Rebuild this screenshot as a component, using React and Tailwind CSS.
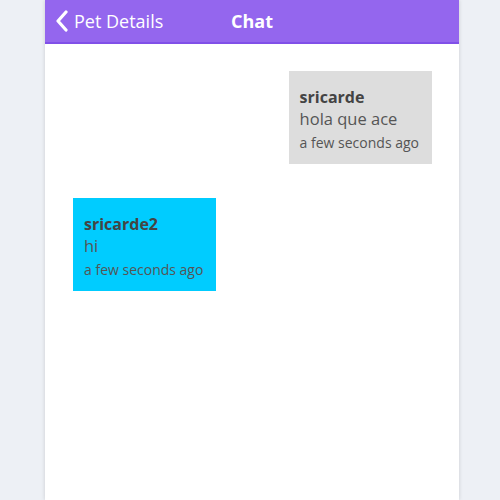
import React from 'react';

const messages = [
  { user: 'sricarde', text: 'hola que ace', time: 'a few seconds ago', mine: true },
  { user: 'sricarde2', text: 'hi', time: 'a few seconds ago', mine: false },
];

const ChatPage = () => {
  return (
    <div className="min-h-[500px] bg-[#edf0f5] font-['Open_Sans',sans-serif]">
      <div className="ml-[45px] w-[414px] min-h-[500px] bg-white shadow-[0_0_4px_rgba(0,0,0,0.15)]">
        <header className="relative h-[44px] bg-[#9466ee] border-b-2 border-[#8050e8] flex items-center justify-center">
          <div className="absolute left-[9px] top-0 h-full flex items-center gap-[4px] text-white">
            <svg width="16" height="22" viewBox="0 0 16 22" fill="none">
              <path d="M12 2 L4 11 L12 20" stroke="white" strokeWidth="3.2" strokeLinecap="round" strokeLinejoin="round" />
            </svg>
            <span className="text-[18px]">Pet Details</span>
          </div>
          <h1 className="text-white text-[18px] font-bold">Chat</h1>
        </header>

        <div className="flex flex-col gap-[34px] px-[27px] pt-[27px]">
          {messages.map((m, i) => (
            <div key={i} className={m.mine ? 'flex justify-end' : 'flex justify-start ml-px'}>
              <div
                className={
                  (m.mine ? 'bg-[#dddddd]' : 'bg-[#00ccff]') +
                  ' pl-[11px] pr-[13px] pt-[15px] pb-[8px] text-[#444]'
                }
              >
                <p className="text-[16px] font-bold leading-[22px]">{m.user}</p>
                <p className="text-[16.5px] leading-[22px] text-[#555]">{m.text}</p>
                <p className="text-[14px] leading-[26px] text-[#555]">{m.time}</p>
              </div>
            </div>
          ))}
        </div>
      </div>
    </div>
  );
};

export default ChatPage;
